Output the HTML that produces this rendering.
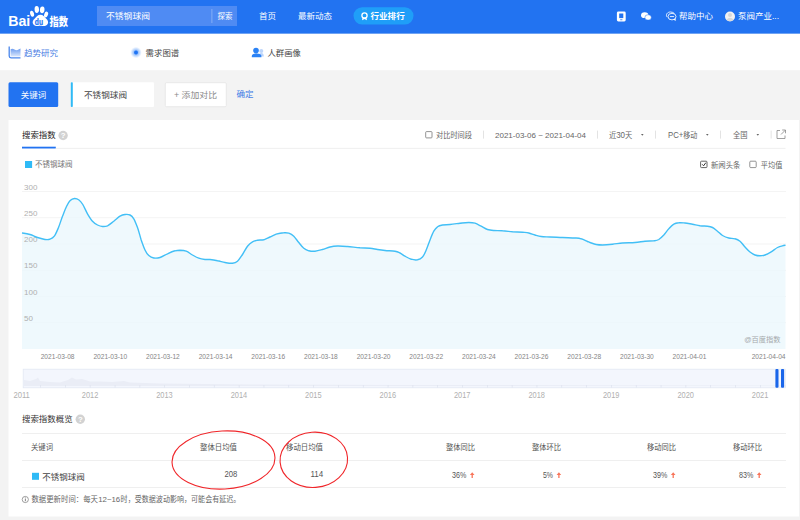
<!DOCTYPE html>
<html lang="zh-CN"><head><meta charset="utf-8"><title>百度指数</title>
<style>
html,body{margin:0;padding:0;background:#f3f3f3;}
body{width:800px;height:520px;overflow:hidden;font-family:"Liberation Sans","Noto Sans CJK SC",sans-serif;}
svg{display:block}
text{font-family:"Liberation Sans","Noto Sans CJK SC",sans-serif;}
</style></head><body>
<svg width="800" height="520" viewBox="0 0 800 520">

<rect x="0" y="0" width="800" height="520" fill="#f3f3f3"/>
<rect x="0" y="0" width="800" height="33.8" fill="#2273f1"/>
<rect x="0" y="33.8" width="800" height="36.4" fill="#ffffff"/>
<text x="8.2" y="26.2" font-size="13.8" font-weight="bold" fill="#fff" textLength="22" lengthAdjust="spacingAndGlyphs">Bai</text>
<g fill="#fff">
<path d="M40.4,14.8 C43,14.8 44.5,17 46,18.5 C48,20.3 48.6,22 47.8,23.8 C47,25.8 44.5,26.3 42.5,26 C41,25.8 39.8,25.8 38.3,26 C36.3,26.3 33.8,25.8 33,23.8 C32.2,22 32.8,20.3 34.8,18.5 C36.3,17 37.8,14.8 40.4,14.8 Z"/>
<ellipse cx="32.1" cy="13.8" rx="1.9" ry="3.1" transform="rotate(-15 32.1 13.8)"/>
<ellipse cx="36.8" cy="9.5" rx="2.2" ry="3.4" transform="rotate(-4 36.8 9.5)"/>
<ellipse cx="42.2" cy="9.8" rx="2.3" ry="3.4" transform="rotate(6 42.2 9.8)"/>
<ellipse cx="46.1" cy="14.5" rx="1.9" ry="3" transform="rotate(18 46.1 14.5)"/>
</g>
<text x="34.8" y="24.6" font-size="8.8" font-weight="bold" fill="#2273f1" stroke="#2273f1" stroke-width="0.2" textLength="8.2" lengthAdjust="spacingAndGlyphs">du</text>
<text x="49.5" y="25.7" font-size="10.8" font-weight="900" fill="#fff" textLength="18.6" lengthAdjust="spacingAndGlyphs">指数</text>
<rect x="97" y="6" width="140" height="20" fill="#4f8bf3"/>
<text x="106" y="19.2" font-size="8.5" fill="#fff" textLength="44" lengthAdjust="spacingAndGlyphs">不锈钢球阀</text>
<rect x="211.5" y="9" width="0.8" height="14" fill="#8fb6f8"/>
<text x="217.5" y="19.2" font-size="8" fill="#fff" textLength="15" lengthAdjust="spacingAndGlyphs">探索</text>
<text x="259" y="19.2" font-size="8.5" fill="#fff" textLength="17" lengthAdjust="spacingAndGlyphs">首页</text>
<text x="298" y="19.2" font-size="8.5" fill="#fff" textLength="34" lengthAdjust="spacingAndGlyphs">最新动态</text>
<rect x="353.5" y="7.2" width="60" height="17.2" rx="8.6" fill="#1f9ef8"/>
<circle cx="364.5" cy="15.5" r="2.6" fill="none" stroke="#fff" stroke-width="1.3"/><path d="M362.6,17.6 L362,20.2 L364.5,19 L367,20.2 L366.4,17.6Z" fill="#fff"/>
<text x="370.4" y="18.9" font-size="8.3" font-weight="bold" fill="#fff" textLength="34.4" lengthAdjust="spacingAndGlyphs">行业排行</text>
<rect x="616.9" y="11.5" width="8.8" height="9.9" rx="1.4" fill="#fff"/><rect x="619.2" y="13.5" width="4.1" height="4.6" fill="#2273f1"/><rect x="620.2" y="19.4" width="2.2" height="0.8" fill="#2273f1"/>
<ellipse cx="644.7" cy="15.2" rx="3.7" ry="2.9" fill="#fff"/><ellipse cx="648.1" cy="17.4" rx="3.2" ry="2.7" fill="#fff" stroke="#2273f1" stroke-width="0.5"/>
<ellipse cx="672" cy="16.6" rx="4" ry="3.3" fill="none" stroke="#fff" stroke-width="0.85"/><path d="M667.2,17.2 C665.2,14.6 667.5,11.9 670.6,12 C672.2,12.05 673.4,12.6 674.2,13.4" fill="none" stroke="#fff" stroke-width="0.85"/><path d="M673.6,19.6 L675.6,20.6 L675.3,18.6" fill="#fff" stroke="#fff" stroke-width="0.4"/><rect x="669.9" y="16.2" width="4.2" height="0.85" fill="#fff"/>
<text x="679" y="19.2" font-size="8.5" fill="#fff" textLength="34" lengthAdjust="spacingAndGlyphs">帮助中心</text>
<circle cx="730" cy="16.5" r="5" fill="#f2f2f2"/><circle cx="730" cy="15" r="2" fill="#d8d8d8"/><path d="M726.3,19.8 Q730,15.5 733.7,19.8 Q730,22.3 726.3,19.8Z" fill="#d8d8d8"/>
<text x="738" y="19.2" font-size="8.5" fill="#fff" textLength="41" lengthAdjust="spacingAndGlyphs">泵阀产业...</text>
<defs><linearGradient id="ga" x1="0" y1="0" x2="0" y2="1"><stop offset="0" stop-color="#6c9cf0"/><stop offset="1" stop-color="#dce8fc"/></linearGradient></defs><path d="M9.2,46.5 V56 Q9.2,57.8 11,57.8 H20.5" fill="none" stroke="#4a86ec" stroke-width="1.3"/><path d="M10.6,56.6 V49.2 Q12.5,48.2 14.5,49.6 T18.5,49.6 L20.5,48.6 V56.6Z" fill="url(#ga)"/>
<text x="24" y="55.8" font-size="8.5" fill="#4a80e4" textLength="34" lengthAdjust="spacingAndGlyphs">趋势研究</text>
<defs><radialGradient id="gh"><stop offset="0.3" stop-color="#5e9df8" stop-opacity="0.75"/><stop offset="0.65" stop-color="#86b6fa" stop-opacity="0.45"/><stop offset="1" stop-color="#a9cbfc" stop-opacity="0"/></radialGradient></defs><circle cx="136" cy="52.5" r="5.8" fill="url(#gh)"/><circle cx="136" cy="52.5" r="1.9" fill="#1f74f4"/>
<text x="145.6" y="55.8" font-size="8.5" fill="#444" textLength="33.6" lengthAdjust="spacingAndGlyphs">需求图谱</text>
<circle cx="261.3" cy="51" r="2" fill="#bcd5fb"/><path d="M258.5,56.6 Q258.5,53 261.5,53 Q263.8,53 263.8,56.6Z" fill="#bcd5fb"/><circle cx="256" cy="50.6" r="2.8" fill="#2b82f5"/><path d="M251.8,57.2 V56 Q251.8,53.4 256.6,53.4 Q261.4,53.4 261.4,56 V57.2Z" fill="#2b82f5"/>
<text x="267.4" y="55.8" font-size="8.5" fill="#444" textLength="33.6" lengthAdjust="spacingAndGlyphs">人群画像</text>
<rect x="8.5" y="82.3" width="49.7" height="24.7" rx="1.5" fill="#2273f1"/>
<text x="20.8" y="98.2" font-size="8.5" fill="#fff" textLength="25.4" lengthAdjust="spacingAndGlyphs">关键词</text>
<rect x="70.8" y="82.3" width="83.2" height="24.7" rx="1" fill="#fff"/><rect x="70.8" y="82.3" width="2" height="24.7" rx="0.8" fill="#2fbaf6"/>
<text x="84" y="98.2" font-size="8.5" fill="#444" textLength="43" lengthAdjust="spacingAndGlyphs">不锈钢球阀</text>
<rect x="165.3" y="82.7" width="61" height="24" rx="1.2" fill="#fff" stroke="#e4e4e4" stroke-width="0.8"/>
<text x="174" y="98.2" font-size="8.5" fill="#8a8a8a" textLength="43" lengthAdjust="spacingAndGlyphs">+ 添加对比</text>
<text x="236.5" y="96.8" font-size="8.5" fill="#3f7be6" textLength="17" lengthAdjust="spacingAndGlyphs">确定</text>
<rect x="8.5" y="120" width="790.5" height="396.5" fill="#fff"/>
<text x="22" y="138.3" font-size="8.5" fill="#222" textLength="33.6" lengthAdjust="spacingAndGlyphs">搜索指数</text>
<rect x="22" y="146.7" width="33.8" height="1.8" fill="#2273f1"/>
<rect x="55.8" y="147.9" width="729.7" height="0.8" fill="#ececec"/>
<circle cx="63.1" cy="135.5" r="4.7" fill="#d2d2d2"/><text x="63.1" y="138.3" font-size="7.8" font-weight="bold" fill="#fff" text-anchor="middle">?</text>
<rect x="425.7" y="131.6" width="6.3" height="6.3" rx="0.8" fill="#fff" stroke="#777" stroke-width="0.8"/>
<text x="436" y="138" font-size="7.5" fill="#666" textLength="36" lengthAdjust="spacingAndGlyphs">对比时间段</text>
<rect x="483" y="130.6" width="0.8" height="8" fill="#dcdcdc"/>
<rect x="597" y="130.6" width="0.8" height="8" fill="#dcdcdc"/>
<rect x="655" y="130.6" width="0.8" height="8" fill="#dcdcdc"/>
<rect x="720" y="130.6" width="0.8" height="8" fill="#dcdcdc"/>
<rect x="770.7" y="130.6" width="0.8" height="8" fill="#dcdcdc"/>
<text x="495" y="137.9" font-size="8" fill="#666" textLength="91" lengthAdjust="spacingAndGlyphs">2021-03-06 ~ 2021-04-04</text>
<text x="609" y="138" font-size="7.5" fill="#666" textLength="23.2" lengthAdjust="spacingAndGlyphs">近<tspan font-size="8.3">30</tspan>天</text>
<path d="M641,134 h2.6 l-1.3,1.7z" fill="#666"/>
<text x="668" y="138" font-size="7.5" fill="#666" textLength="29.4" lengthAdjust="spacingAndGlyphs"><tspan font-size="8.3">PC+</tspan>移动</text>
<path d="M706,134 h2.6 l-1.3,1.7z" fill="#666"/>
<text x="733" y="138" font-size="7.5" fill="#666" textLength="14.5" lengthAdjust="spacingAndGlyphs">全国</text>
<path d="M756.5,134 h2.6 l-1.3,1.7z" fill="#666"/>
<path d="M780,130.5 H777 V138.5 H785 V135.5" fill="none" stroke="#888" stroke-width="0.8"/><path d="M781,134.5 L785.3,130.2 M782.2,130 H785.5 V133.3" fill="none" stroke="#888" stroke-width="0.8"/>
<rect x="25" y="161" width="7.1" height="7" fill="#2fbaf6"/>
<text x="35" y="166.8" font-size="7.5" fill="#777" textLength="37.5" lengthAdjust="spacingAndGlyphs">不锈钢球阀</text>
<rect x="700.6" y="161.2" width="6.4" height="6.4" rx="0.9" fill="#fff" stroke="#555" stroke-width="0.9"/><path d="M702.2,164.3 L703.6,165.8 L705.8,162.7" fill="none" stroke="#333" stroke-width="1"/>
<text x="711" y="167.6" font-size="7.5" fill="#666" textLength="29.3" lengthAdjust="spacingAndGlyphs">新闻头条</text>
<rect x="749.8" y="161.2" width="6.4" height="6.4" rx="0.9" fill="#fff" stroke="#777" stroke-width="0.8"/>
<text x="760.8" y="167.6" font-size="7.5" fill="#666" textLength="21.5" lengthAdjust="spacingAndGlyphs">平均值</text>
<rect x="22" y="191.10" width="764" height="0.8" fill="#f1f1f1"/>
<rect x="22" y="217.35" width="764" height="0.8" fill="#f1f1f1"/>
<rect x="22" y="243.60" width="764" height="0.8" fill="#f1f1f1"/>
<rect x="22" y="269.85" width="764" height="0.8" fill="#f1f1f1"/>
<rect x="22" y="296.10" width="764" height="0.8" fill="#f1f1f1"/>
<rect x="22" y="322.35" width="764" height="0.8" fill="#f1f1f1"/>
<path d="M22.0,233.0 C23.3,233.2 27.4,233.8 30.0,234.5 C32.6,235.2 35.0,236.7 37.5,237.5 C40.0,238.3 42.9,239.2 45.0,239.5 C47.1,239.8 48.5,239.8 50.0,239.2 C51.5,238.7 52.9,238.2 54.3,236.2 C55.7,234.3 57.1,230.8 58.5,227.5 C59.9,224.2 61.1,219.8 62.5,216.2 C63.9,212.7 65.3,208.9 66.6,206.2 C67.9,203.6 68.9,201.9 70.2,200.6 C71.5,199.3 73.0,198.6 74.5,198.5 C76.0,198.4 77.6,199.0 79.0,200.0 C80.4,201.0 81.4,202.2 82.8,204.5 C84.2,206.8 85.9,211.0 87.5,213.8 C89.1,216.5 90.8,219.4 92.5,221.2 C94.2,223.1 95.8,224.1 97.5,225.0 C99.2,225.9 100.8,226.4 102.5,226.5 C104.2,226.6 105.6,226.6 107.5,225.8 C109.4,224.9 111.7,222.8 113.8,221.2 C115.8,219.7 118.1,217.4 120.0,216.2 C121.9,215.1 123.3,214.7 125.0,214.5 C126.7,214.3 128.5,214.3 130.0,215.0 C131.5,215.7 132.5,216.7 133.8,218.8 C135.0,220.8 136.2,224.0 137.5,227.5 C138.8,231.0 140.0,236.2 141.2,240.0 C142.5,243.8 143.8,247.4 145.0,250.0 C146.2,252.6 147.3,254.2 148.8,255.5 C150.2,256.8 151.9,257.7 153.8,258.0 C155.6,258.3 157.7,258.2 160.0,257.5 C162.3,256.8 165.0,254.9 167.5,253.8 C170.0,252.6 172.9,251.3 175.0,250.8 C177.1,250.2 178.1,250.2 180.0,250.2 C181.9,250.3 184.2,250.5 186.2,251.2 C188.3,252.0 190.4,253.8 192.5,255.0 C194.6,256.2 196.7,257.5 198.8,258.2 C200.8,259.0 203.1,259.3 205.0,259.5 C206.9,259.7 207.9,259.3 210.0,259.5 C212.1,259.7 215.0,260.2 217.5,260.8 C220.0,261.2 222.5,262.1 225.0,262.5 C227.5,262.9 230.4,263.5 232.5,263.2 C234.6,263.0 235.8,262.7 237.5,261.2 C239.2,259.8 240.8,257.0 242.5,254.5 C244.2,252.0 245.8,248.4 247.5,246.2 C249.2,244.1 250.8,242.8 252.5,241.8 C254.2,240.8 255.6,240.6 257.5,240.2 C259.4,239.9 261.7,240.3 263.8,239.8 C265.8,239.2 267.9,237.9 270.0,237.0 C272.1,236.1 274.0,235.0 276.2,234.2 C278.5,233.5 281.7,232.9 283.8,232.8 C285.8,232.6 287.1,232.7 288.8,233.2 C290.4,233.8 292.1,234.7 293.8,236.2 C295.4,237.8 297.1,240.5 298.8,242.5 C300.4,244.5 302.1,246.9 303.8,248.2 C305.4,249.6 306.9,250.2 308.8,250.8 C310.6,251.2 312.7,251.5 315.0,251.2 C317.3,251.0 320.0,250.2 322.5,249.5 C325.0,248.8 327.5,247.6 330.0,247.0 C332.5,246.4 334.6,246.1 337.5,246.0 C340.4,245.9 343.8,246.2 347.5,246.5 C351.2,246.8 356.2,247.5 360.0,247.8 C363.8,248.0 367.1,248.0 370.0,248.2 C372.9,248.5 375.0,249.1 377.5,249.5 C380.0,249.9 382.1,250.2 385.0,250.5 C387.9,250.8 392.5,250.8 395.0,251.2 C397.5,251.7 398.3,252.2 400.0,253.0 C401.7,253.8 403.1,255.2 405.0,256.2 C406.9,257.3 409.2,258.7 411.2,259.2 C413.3,259.8 415.6,260.1 417.5,259.8 C419.4,259.4 421.0,258.6 422.5,257.0 C424.0,255.4 425.0,252.8 426.2,250.0 C427.5,247.2 428.8,243.1 430.0,240.0 C431.2,236.9 432.5,233.5 433.8,231.2 C435.0,229.0 436.0,227.8 437.5,226.8 C439.0,225.7 440.4,225.4 442.5,225.0 C444.6,224.6 447.1,224.8 450.0,224.5 C452.9,224.2 456.9,223.6 460.0,223.2 C463.1,222.9 466.2,222.5 468.8,222.5 C471.2,222.5 472.9,222.6 475.0,223.2 C477.1,223.9 479.2,225.2 481.2,226.2 C483.3,227.3 485.4,228.8 487.5,229.5 C489.6,230.2 491.2,230.3 493.8,230.5 C496.2,230.7 499.4,230.5 502.5,230.8 C505.6,231.0 509.2,231.5 512.5,231.8 C515.8,232.0 519.8,232.0 522.5,232.2 C525.2,232.5 526.7,232.5 528.8,233.0 C530.8,233.5 532.9,234.4 535.0,235.0 C537.1,235.6 538.8,236.2 541.2,236.5 C543.8,236.8 546.5,236.8 550.0,237.0 C553.5,237.2 558.3,237.3 562.5,237.5 C566.7,237.7 571.9,237.8 575.0,238.0 C578.1,238.2 579.2,238.2 581.2,238.8 C583.3,239.3 586.0,240.9 587.5,241.5 C589.0,242.1 588.5,242.0 590.0,242.5 C591.5,243.0 594.2,244.1 596.2,244.5 C598.3,244.9 599.8,245.0 602.5,245.0 C605.2,245.0 609.2,244.6 612.5,244.2 C615.8,243.9 618.8,243.3 622.5,243.0 C626.2,242.7 631.2,242.8 635.0,242.5 C638.8,242.2 641.9,241.5 645.0,241.2 C648.1,241.0 651.5,241.0 653.8,240.8 C656.0,240.5 657.1,240.5 658.8,239.5 C660.4,238.5 662.1,236.8 663.8,235.0 C665.4,233.2 667.1,230.5 668.8,228.8 C670.4,227.0 672.1,225.2 673.8,224.2 C675.4,223.2 676.9,223.0 678.8,222.8 C680.6,222.5 682.7,222.8 685.0,223.0 C687.3,223.2 690.0,223.8 692.5,224.2 C695.0,224.7 697.5,225.4 700.0,225.8 C702.5,226.1 705.4,226.0 707.5,226.2 C709.6,226.5 710.8,226.7 712.5,227.5 C714.2,228.3 715.8,229.9 717.5,231.2 C719.2,232.6 720.6,234.4 722.5,235.5 C724.4,236.6 726.7,237.5 728.8,238.0 C730.8,238.5 733.1,238.2 735.0,238.8 C736.9,239.3 738.3,239.9 740.0,241.2 C741.7,242.6 743.3,245.2 745.0,247.0 C746.7,248.8 748.3,250.7 750.0,252.0 C751.7,253.3 753.3,254.4 755.0,255.0 C756.7,255.6 758.3,255.8 760.0,255.8 C761.7,255.8 763.1,255.7 765.0,255.0 C766.9,254.3 769.2,253.0 771.2,251.8 C773.3,250.5 775.6,248.5 777.5,247.5 C779.4,246.5 781.2,246.1 782.5,245.8 C783.8,245.4 785.0,245.3 785.5,245.2 L785.5,349 L22,349 Z" fill="#ebf7fd" fill-opacity="0.8"/>
<text x="24" y="189.50" font-size="8" fill="#b0b0b0">300</text>
<text x="24" y="215.75" font-size="8" fill="#b0b0b0">250</text>
<text x="24" y="242.00" font-size="8" fill="#b0b0b0">200</text>
<text x="24" y="268.25" font-size="8" fill="#b0b0b0">150</text>
<text x="24" y="294.50" font-size="8" fill="#b0b0b0">100</text>
<text x="24" y="320.75" font-size="8" fill="#b0b0b0">50</text>
<path d="M22.0,233.0 C23.3,233.2 27.4,233.8 30.0,234.5 C32.6,235.2 35.0,236.7 37.5,237.5 C40.0,238.3 42.9,239.2 45.0,239.5 C47.1,239.8 48.5,239.8 50.0,239.2 C51.5,238.7 52.9,238.2 54.3,236.2 C55.7,234.3 57.1,230.8 58.5,227.5 C59.9,224.2 61.1,219.8 62.5,216.2 C63.9,212.7 65.3,208.9 66.6,206.2 C67.9,203.6 68.9,201.9 70.2,200.6 C71.5,199.3 73.0,198.6 74.5,198.5 C76.0,198.4 77.6,199.0 79.0,200.0 C80.4,201.0 81.4,202.2 82.8,204.5 C84.2,206.8 85.9,211.0 87.5,213.8 C89.1,216.5 90.8,219.4 92.5,221.2 C94.2,223.1 95.8,224.1 97.5,225.0 C99.2,225.9 100.8,226.4 102.5,226.5 C104.2,226.6 105.6,226.6 107.5,225.8 C109.4,224.9 111.7,222.8 113.8,221.2 C115.8,219.7 118.1,217.4 120.0,216.2 C121.9,215.1 123.3,214.7 125.0,214.5 C126.7,214.3 128.5,214.3 130.0,215.0 C131.5,215.7 132.5,216.7 133.8,218.8 C135.0,220.8 136.2,224.0 137.5,227.5 C138.8,231.0 140.0,236.2 141.2,240.0 C142.5,243.8 143.8,247.4 145.0,250.0 C146.2,252.6 147.3,254.2 148.8,255.5 C150.2,256.8 151.9,257.7 153.8,258.0 C155.6,258.3 157.7,258.2 160.0,257.5 C162.3,256.8 165.0,254.9 167.5,253.8 C170.0,252.6 172.9,251.3 175.0,250.8 C177.1,250.2 178.1,250.2 180.0,250.2 C181.9,250.3 184.2,250.5 186.2,251.2 C188.3,252.0 190.4,253.8 192.5,255.0 C194.6,256.2 196.7,257.5 198.8,258.2 C200.8,259.0 203.1,259.3 205.0,259.5 C206.9,259.7 207.9,259.3 210.0,259.5 C212.1,259.7 215.0,260.2 217.5,260.8 C220.0,261.2 222.5,262.1 225.0,262.5 C227.5,262.9 230.4,263.5 232.5,263.2 C234.6,263.0 235.8,262.7 237.5,261.2 C239.2,259.8 240.8,257.0 242.5,254.5 C244.2,252.0 245.8,248.4 247.5,246.2 C249.2,244.1 250.8,242.8 252.5,241.8 C254.2,240.8 255.6,240.6 257.5,240.2 C259.4,239.9 261.7,240.3 263.8,239.8 C265.8,239.2 267.9,237.9 270.0,237.0 C272.1,236.1 274.0,235.0 276.2,234.2 C278.5,233.5 281.7,232.9 283.8,232.8 C285.8,232.6 287.1,232.7 288.8,233.2 C290.4,233.8 292.1,234.7 293.8,236.2 C295.4,237.8 297.1,240.5 298.8,242.5 C300.4,244.5 302.1,246.9 303.8,248.2 C305.4,249.6 306.9,250.2 308.8,250.8 C310.6,251.2 312.7,251.5 315.0,251.2 C317.3,251.0 320.0,250.2 322.5,249.5 C325.0,248.8 327.5,247.6 330.0,247.0 C332.5,246.4 334.6,246.1 337.5,246.0 C340.4,245.9 343.8,246.2 347.5,246.5 C351.2,246.8 356.2,247.5 360.0,247.8 C363.8,248.0 367.1,248.0 370.0,248.2 C372.9,248.5 375.0,249.1 377.5,249.5 C380.0,249.9 382.1,250.2 385.0,250.5 C387.9,250.8 392.5,250.8 395.0,251.2 C397.5,251.7 398.3,252.2 400.0,253.0 C401.7,253.8 403.1,255.2 405.0,256.2 C406.9,257.3 409.2,258.7 411.2,259.2 C413.3,259.8 415.6,260.1 417.5,259.8 C419.4,259.4 421.0,258.6 422.5,257.0 C424.0,255.4 425.0,252.8 426.2,250.0 C427.5,247.2 428.8,243.1 430.0,240.0 C431.2,236.9 432.5,233.5 433.8,231.2 C435.0,229.0 436.0,227.8 437.5,226.8 C439.0,225.7 440.4,225.4 442.5,225.0 C444.6,224.6 447.1,224.8 450.0,224.5 C452.9,224.2 456.9,223.6 460.0,223.2 C463.1,222.9 466.2,222.5 468.8,222.5 C471.2,222.5 472.9,222.6 475.0,223.2 C477.1,223.9 479.2,225.2 481.2,226.2 C483.3,227.3 485.4,228.8 487.5,229.5 C489.6,230.2 491.2,230.3 493.8,230.5 C496.2,230.7 499.4,230.5 502.5,230.8 C505.6,231.0 509.2,231.5 512.5,231.8 C515.8,232.0 519.8,232.0 522.5,232.2 C525.2,232.5 526.7,232.5 528.8,233.0 C530.8,233.5 532.9,234.4 535.0,235.0 C537.1,235.6 538.8,236.2 541.2,236.5 C543.8,236.8 546.5,236.8 550.0,237.0 C553.5,237.2 558.3,237.3 562.5,237.5 C566.7,237.7 571.9,237.8 575.0,238.0 C578.1,238.2 579.2,238.2 581.2,238.8 C583.3,239.3 586.0,240.9 587.5,241.5 C589.0,242.1 588.5,242.0 590.0,242.5 C591.5,243.0 594.2,244.1 596.2,244.5 C598.3,244.9 599.8,245.0 602.5,245.0 C605.2,245.0 609.2,244.6 612.5,244.2 C615.8,243.9 618.8,243.3 622.5,243.0 C626.2,242.7 631.2,242.8 635.0,242.5 C638.8,242.2 641.9,241.5 645.0,241.2 C648.1,241.0 651.5,241.0 653.8,240.8 C656.0,240.5 657.1,240.5 658.8,239.5 C660.4,238.5 662.1,236.8 663.8,235.0 C665.4,233.2 667.1,230.5 668.8,228.8 C670.4,227.0 672.1,225.2 673.8,224.2 C675.4,223.2 676.9,223.0 678.8,222.8 C680.6,222.5 682.7,222.8 685.0,223.0 C687.3,223.2 690.0,223.8 692.5,224.2 C695.0,224.7 697.5,225.4 700.0,225.8 C702.5,226.1 705.4,226.0 707.5,226.2 C709.6,226.5 710.8,226.7 712.5,227.5 C714.2,228.3 715.8,229.9 717.5,231.2 C719.2,232.6 720.6,234.4 722.5,235.5 C724.4,236.6 726.7,237.5 728.8,238.0 C730.8,238.5 733.1,238.2 735.0,238.8 C736.9,239.3 738.3,239.9 740.0,241.2 C741.7,242.6 743.3,245.2 745.0,247.0 C746.7,248.8 748.3,250.7 750.0,252.0 C751.7,253.3 753.3,254.4 755.0,255.0 C756.7,255.6 758.3,255.8 760.0,255.8 C761.7,255.8 763.1,255.7 765.0,255.0 C766.9,254.3 769.2,253.0 771.2,251.8 C773.3,250.5 775.6,248.5 777.5,247.5 C779.4,246.5 781.2,246.1 782.5,245.8 C783.8,245.4 785.0,245.3 785.5,245.2" fill="none" stroke="#42bff6" stroke-width="1.4" stroke-linejoin="round"/>
<text x="744.2" y="342.3" font-size="7.2" fill="#a5a9ac" textLength="36.3" lengthAdjust="spacingAndGlyphs">@百度指数</text>
<text x="40.7" y="359" font-size="7" fill="#858585" textLength="33.8" lengthAdjust="spacingAndGlyphs">2021-03-08</text>
<text x="93.4" y="359" font-size="7" fill="#858585" textLength="33.8" lengthAdjust="spacingAndGlyphs">2021-03-10</text>
<text x="146.0" y="359" font-size="7" fill="#858585" textLength="33.8" lengthAdjust="spacingAndGlyphs">2021-03-12</text>
<text x="198.7" y="359" font-size="7" fill="#858585" textLength="33.8" lengthAdjust="spacingAndGlyphs">2021-03-14</text>
<text x="251.3" y="359" font-size="7" fill="#858585" textLength="33.8" lengthAdjust="spacingAndGlyphs">2021-03-16</text>
<text x="304.0" y="359" font-size="7" fill="#858585" textLength="33.8" lengthAdjust="spacingAndGlyphs">2021-03-18</text>
<text x="356.7" y="359" font-size="7" fill="#858585" textLength="33.8" lengthAdjust="spacingAndGlyphs">2021-03-20</text>
<text x="409.3" y="359" font-size="7" fill="#858585" textLength="33.8" lengthAdjust="spacingAndGlyphs">2021-03-22</text>
<text x="462.0" y="359" font-size="7" fill="#858585" textLength="33.8" lengthAdjust="spacingAndGlyphs">2021-03-24</text>
<text x="514.6" y="359" font-size="7" fill="#858585" textLength="33.8" lengthAdjust="spacingAndGlyphs">2021-03-26</text>
<text x="567.3" y="359" font-size="7" fill="#858585" textLength="33.8" lengthAdjust="spacingAndGlyphs">2021-03-28</text>
<text x="620.0" y="359" font-size="7" fill="#858585" textLength="33.8" lengthAdjust="spacingAndGlyphs">2021-03-30</text>
<text x="672.6" y="359" font-size="7" fill="#858585" textLength="33.8" lengthAdjust="spacingAndGlyphs">2021-04-01</text>
<text x="751.7" y="359" font-size="7" fill="#858585" textLength="33.8" lengthAdjust="spacingAndGlyphs">2021-04-04</text>
<rect x="23.2" y="369.2" width="762" height="18.6" fill="#f3f6fd" stroke="#e3e8f4" stroke-width="0.8"/>
<path d="M24,386 L24,380 L30,381 L36,379 L38,377.5 L40,381 L50,382 L60,382.5 L68,380 L72,377.5 L76,379.5 L82,379 L90,381.5 L100,381.5 L112,382 L124,381 L130,382.5 L160,383.5 L250,384.5 L400,385 L600,385.2 L785,385.4 L785,386Z" fill="#eaedf6"/>
<rect x="775.4" y="369" width="3.1" height="18.8" rx="1" fill="#1a66ea"/><rect x="781" y="369" width="3.1" height="18.8" rx="1" fill="#1a66ea"/>
<rect x="40.2" y="385" width="0.7" height="2.6" fill="#dde2ee"/>
<rect x="65.0" y="385" width="0.7" height="2.6" fill="#dde2ee"/>
<rect x="89.8" y="385" width="0.7" height="2.6" fill="#dde2ee"/>
<rect x="114.7" y="385" width="0.7" height="2.6" fill="#dde2ee"/>
<rect x="139.5" y="385" width="0.7" height="2.6" fill="#dde2ee"/>
<rect x="164.3" y="385" width="0.7" height="2.6" fill="#dde2ee"/>
<rect x="189.1" y="385" width="0.7" height="2.6" fill="#dde2ee"/>
<rect x="213.9" y="385" width="0.7" height="2.6" fill="#dde2ee"/>
<rect x="238.8" y="385" width="0.7" height="2.6" fill="#dde2ee"/>
<rect x="263.6" y="385" width="0.7" height="2.6" fill="#dde2ee"/>
<rect x="288.4" y="385" width="0.7" height="2.6" fill="#dde2ee"/>
<rect x="313.2" y="385" width="0.7" height="2.6" fill="#dde2ee"/>
<rect x="338.0" y="385" width="0.7" height="2.6" fill="#dde2ee"/>
<rect x="362.9" y="385" width="0.7" height="2.6" fill="#dde2ee"/>
<rect x="387.7" y="385" width="0.7" height="2.6" fill="#dde2ee"/>
<rect x="412.5" y="385" width="0.7" height="2.6" fill="#dde2ee"/>
<rect x="437.3" y="385" width="0.7" height="2.6" fill="#dde2ee"/>
<rect x="462.1" y="385" width="0.7" height="2.6" fill="#dde2ee"/>
<rect x="487.0" y="385" width="0.7" height="2.6" fill="#dde2ee"/>
<rect x="511.8" y="385" width="0.7" height="2.6" fill="#dde2ee"/>
<rect x="536.6" y="385" width="0.7" height="2.6" fill="#dde2ee"/>
<rect x="561.4" y="385" width="0.7" height="2.6" fill="#dde2ee"/>
<rect x="586.2" y="385" width="0.7" height="2.6" fill="#dde2ee"/>
<rect x="611.1" y="385" width="0.7" height="2.6" fill="#dde2ee"/>
<rect x="635.9" y="385" width="0.7" height="2.6" fill="#dde2ee"/>
<rect x="660.7" y="385" width="0.7" height="2.6" fill="#dde2ee"/>
<rect x="685.5" y="385" width="0.7" height="2.6" fill="#dde2ee"/>
<rect x="710.3" y="385" width="0.7" height="2.6" fill="#dde2ee"/>
<rect x="735.2" y="385" width="0.7" height="2.6" fill="#dde2ee"/>
<rect x="760.0" y="385" width="0.7" height="2.6" fill="#dde2ee"/>
<rect x="784.8" y="385" width="0.7" height="2.6" fill="#dde2ee"/>
<text x="13.4" y="398.3" font-size="8.3" fill="#b0b0b0" textLength="16.5" lengthAdjust="spacingAndGlyphs">2011</text>
<text x="81.8" y="398.3" font-size="8.3" fill="#b0b0b0" textLength="16.5" lengthAdjust="spacingAndGlyphs">2012</text>
<text x="156.2" y="398.3" font-size="8.3" fill="#b0b0b0" textLength="16.5" lengthAdjust="spacingAndGlyphs">2013</text>
<text x="230.7" y="398.3" font-size="8.3" fill="#b0b0b0" textLength="16.5" lengthAdjust="spacingAndGlyphs">2014</text>
<text x="305.1" y="398.3" font-size="8.3" fill="#b0b0b0" textLength="16.5" lengthAdjust="spacingAndGlyphs">2015</text>
<text x="379.6" y="398.3" font-size="8.3" fill="#b0b0b0" textLength="16.5" lengthAdjust="spacingAndGlyphs">2016</text>
<text x="454.0" y="398.3" font-size="8.3" fill="#b0b0b0" textLength="16.5" lengthAdjust="spacingAndGlyphs">2017</text>
<text x="528.5" y="398.3" font-size="8.3" fill="#b0b0b0" textLength="16.5" lengthAdjust="spacingAndGlyphs">2018</text>
<text x="602.9" y="398.3" font-size="8.3" fill="#b0b0b0" textLength="16.5" lengthAdjust="spacingAndGlyphs">2019</text>
<text x="677.4" y="398.3" font-size="8.3" fill="#b0b0b0" textLength="16.5" lengthAdjust="spacingAndGlyphs">2020</text>
<text x="751.8" y="398.3" font-size="8.3" fill="#b0b0b0" textLength="16.5" lengthAdjust="spacingAndGlyphs">2021</text>
<text x="22" y="422" font-size="8.5" fill="#333" textLength="50.6" lengthAdjust="spacingAndGlyphs">搜索指数概览</text>
<circle cx="80.3" cy="419.3" r="4.7" fill="#d2d2d2"/><text x="80.3" y="422.1" font-size="7.8" font-weight="bold" fill="#fff" text-anchor="middle">?</text>
<rect x="22" y="433" width="764" height="0.8" fill="#ececec"/>
<rect x="22" y="460" width="764" height="0.8" fill="#ececec"/>
<rect x="22" y="487" width="764" height="0.8" fill="#ececec"/>
<text x="31" y="450" font-size="7.5" fill="#555" textLength="22" lengthAdjust="spacingAndGlyphs">关键词</text>
<text x="200" y="450" font-size="7.5" fill="#555" textLength="37" lengthAdjust="spacingAndGlyphs">整体日均值</text>
<text x="286" y="450" font-size="7.5" fill="#555" textLength="37" lengthAdjust="spacingAndGlyphs">移动日均值</text>
<text x="446" y="450" font-size="7.5" fill="#555" textLength="29" lengthAdjust="spacingAndGlyphs">整体同比</text>
<text x="532" y="450" font-size="7.5" fill="#555" textLength="29" lengthAdjust="spacingAndGlyphs">整体环比</text>
<text x="647" y="450" font-size="7.5" fill="#555" textLength="29" lengthAdjust="spacingAndGlyphs">移动同比</text>
<text x="733" y="450" font-size="7.5" fill="#555" textLength="29" lengthAdjust="spacingAndGlyphs">移动环比</text>
<rect x="32" y="472.8" width="7" height="7" fill="#2fbaf6"/>
<text x="42.2" y="479.5" font-size="8.5" fill="#444" textLength="42.5" lengthAdjust="spacingAndGlyphs">不锈钢球阀</text>
<text x="224.5" y="476.8" font-size="8.4" fill="#555" textLength="12.8" lengthAdjust="spacingAndGlyphs">208</text>
<text x="310.5" y="476.8" font-size="8.4" fill="#555" textLength="12.8" lengthAdjust="spacingAndGlyphs">114</text>
<text x="452" y="477.8" font-size="8.4" fill="#555" textLength="14.3" lengthAdjust="spacingAndGlyphs">36%</text>
<path d="M472.2,472.2 l2.3,2.7 h-1.65 v3.2 h-1.3 v-3.2 h-1.65z" fill="#f8755a"/>
<text x="543" y="477.8" font-size="8.4" fill="#555" textLength="10" lengthAdjust="spacingAndGlyphs">5%</text>
<path d="M558.9,472.2 l2.3,2.7 h-1.65 v3.2 h-1.3 v-3.2 h-1.65z" fill="#f8755a"/>
<text x="653" y="477.8" font-size="8.4" fill="#555" textLength="14.3" lengthAdjust="spacingAndGlyphs">39%</text>
<path d="M673.2,472.2 l2.3,2.7 h-1.65 v3.2 h-1.3 v-3.2 h-1.65z" fill="#f8755a"/>
<text x="739" y="477.8" font-size="8.4" fill="#555" textLength="14.3" lengthAdjust="spacingAndGlyphs">83%</text>
<path d="M759.2,472.2 l2.3,2.7 h-1.65 v3.2 h-1.3 v-3.2 h-1.65z" fill="#f8755a"/>
<circle cx="25.3" cy="499.5" r="3.1" fill="none" stroke="#777" stroke-width="0.7"/><rect x="24.9" y="498.9" width="0.8" height="2.3" fill="#666"/><rect x="24.9" y="497.5" width="0.8" height="0.9" fill="#666"/>
<text y="502.2" font-size="7.5" fill="#666"><tspan x="31.4" textLength="66.6" lengthAdjust="spacingAndGlyphs">数据更新时间：每天</tspan><tspan x="98.2" font-size="8" textLength="22" lengthAdjust="spacingAndGlyphs">12~16</tspan><tspan x="120.6" textLength="119.8" lengthAdjust="spacingAndGlyphs">时，受数据波动影响，可能会有延迟。</tspan></text>
<ellipse cx="223.5" cy="460" rx="51.5" ry="29" fill="none" stroke="#f0262a" stroke-width="1.1" transform="rotate(-3 223.5 460)"/>
<ellipse cx="313.8" cy="459.8" rx="33.8" ry="27.6" fill="none" stroke="#f0262a" stroke-width="1.1" transform="rotate(-4 313.8 459.8)"/>
</svg></body></html>
